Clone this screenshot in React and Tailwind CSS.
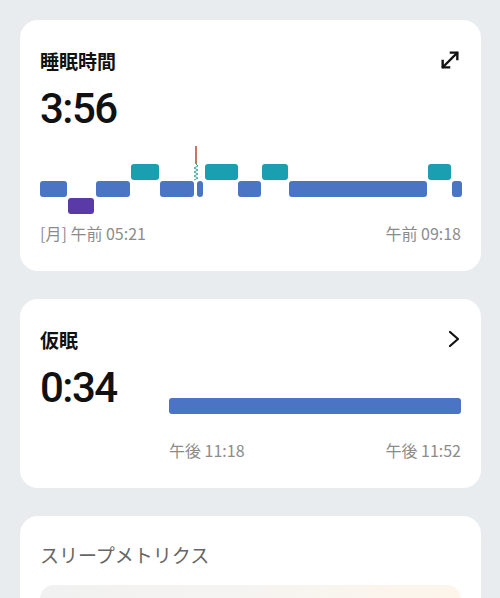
import React from 'react';

const segments = [
  { x: 0, w: 27, row: 1 },
  { x: 28, w: 26, row: 2 },
  { x: 56, w: 34, row: 1 },
  { x: 91, w: 28, row: 0 },
  { x: 120, w: 34, row: 1 },
  { x: 157, w: 6, row: 1 },
  { x: 165, w: 33, row: 0 },
  { x: 198, w: 23, row: 1 },
  { x: 222, w: 26, row: 0 },
  { x: 249, w: 138, row: 1 },
  { x: 388, w: 23, row: 0 },
  { x: 412, w: 10, row: 1 }
];

const rowColors = ['#1a9fb1', '#4b74c5', '#5a3aa7'];
const rowTops = [18, 35, 52];

const SleepChart = () => {
  // zigzag "spring" under the red marker
  let spring = 'M156 18';
  for (let i = 0; i < 8; i++) {
    spring += ` L${i % 2 === 0 ? 158 : 154} ${18 + (i + 1) * 2}`;
  }
  return (
    <svg width="422" height="70" viewBox="0 0 422 70" className="block">
      {segments.map((s, i) => (
        <rect key={i} x={s.x} y={rowTops[s.row]} width={s.w} height="16" rx="3" fill={rowColors[s.row]} />
      ))}
      <line x1="156" y1="0" x2="156" y2="18" stroke="#c0503a" strokeWidth="1.6" />
      <path d={spring} fill="none" stroke="#3aa89a" strokeWidth="1" />
    </svg>
  );
};

const ExpandIcon = () => (
  <svg width="22" height="22" viewBox="0 0 24 24" fill="none" stroke="#111" strokeWidth="2.6" strokeLinecap="square">
    <path d="M4 13v7h7" />
    <path d="M13 4h7v7" />
    <path d="M19.5 4.5 4.5 19.5" />
  </svg>
);

const ChevronIcon = () => (
  <svg width="14" height="18" viewBox="0 0 14 18" fill="none" stroke="#111" strokeWidth="2.2" strokeLinecap="round" strokeLinejoin="round">
    <path d="M3 2l8 7-8 7" />
  </svg>
);

const App = () => {
  const jp = { fontFamily: '"Noto Sans CJK JP", "Noto Sans", sans-serif' };
  const num = { fontFamily: 'Roboto, "Noto Sans", sans-serif' };

  return (
    <div className="w-[500px] h-[598px] overflow-hidden bg-[#e9ecee] pt-[20px] px-[20px] pr-[19px]" style={jp}>
      <div className="flex flex-col gap-[28px]">
        {/* 睡眠時間 */}
        <div className="bg-white rounded-[18px] px-[20px] pt-[28px] pb-[28px]">
          <div className="flex items-center justify-between h-[24px]">
            <span className="text-[19px] font-bold text-[#111] leading-none">睡眠時間</span>
            <ExpandIcon />
          </div>
          <div className="mt-[16px] text-[42px] font-medium tracking-[-1.5px] leading-none text-[#111]" style={num}>3:56</div>
          <div className="mt-[16px]">
            <SleepChart />
          </div>
          <div className="mt-[7px] flex justify-between text-[16px] leading-[20px] text-[#8c8c8c]">
            <span>[月] 午前 05:21</span>
            <span>午前 09:18</span>
          </div>
        </div>

        {/* 仮眠 */}
        <div className="bg-white rounded-[18px] px-[20px] pt-[28px] pb-[28px]">
          <div className="flex items-center justify-between h-[24px]">
            <span className="text-[19px] font-bold text-[#111] leading-none">仮眠</span>
            <ChevronIcon />
          </div>
          <div className="flex mt-[16px]">
            <div className="w-[129px] text-[42px] font-medium tracking-[-1.5px] leading-none text-[#111]" style={num}>0:34</div>
            <div className="flex-1 pt-[31px]">
              <div className="h-[16px] rounded-[3px] bg-[#4b74c5]" />
              <div className="mt-[26px] flex justify-between text-[16px] leading-[20px] text-[#8c8c8c]">
                <span>午後 11:18</span>
                <span>午後 11:52</span>
              </div>
            </div>
          </div>
        </div>

        {/* スリープメトリクス */}
        <div className="bg-white rounded-[18px] px-[20px] pt-[25px] pb-[20px]">
          <div className="h-[28px] flex items-center text-[19px] text-[#666]">スリープメトリクス</div>
          <div className="mt-[16px] h-[120px] rounded-[14px] bg-gradient-to-r from-[#f1f1f1] via-[#f6f4f1] to-[#fdf5ea]" />
        </div>
      </div>
    </div>
  );
};

export default App;
